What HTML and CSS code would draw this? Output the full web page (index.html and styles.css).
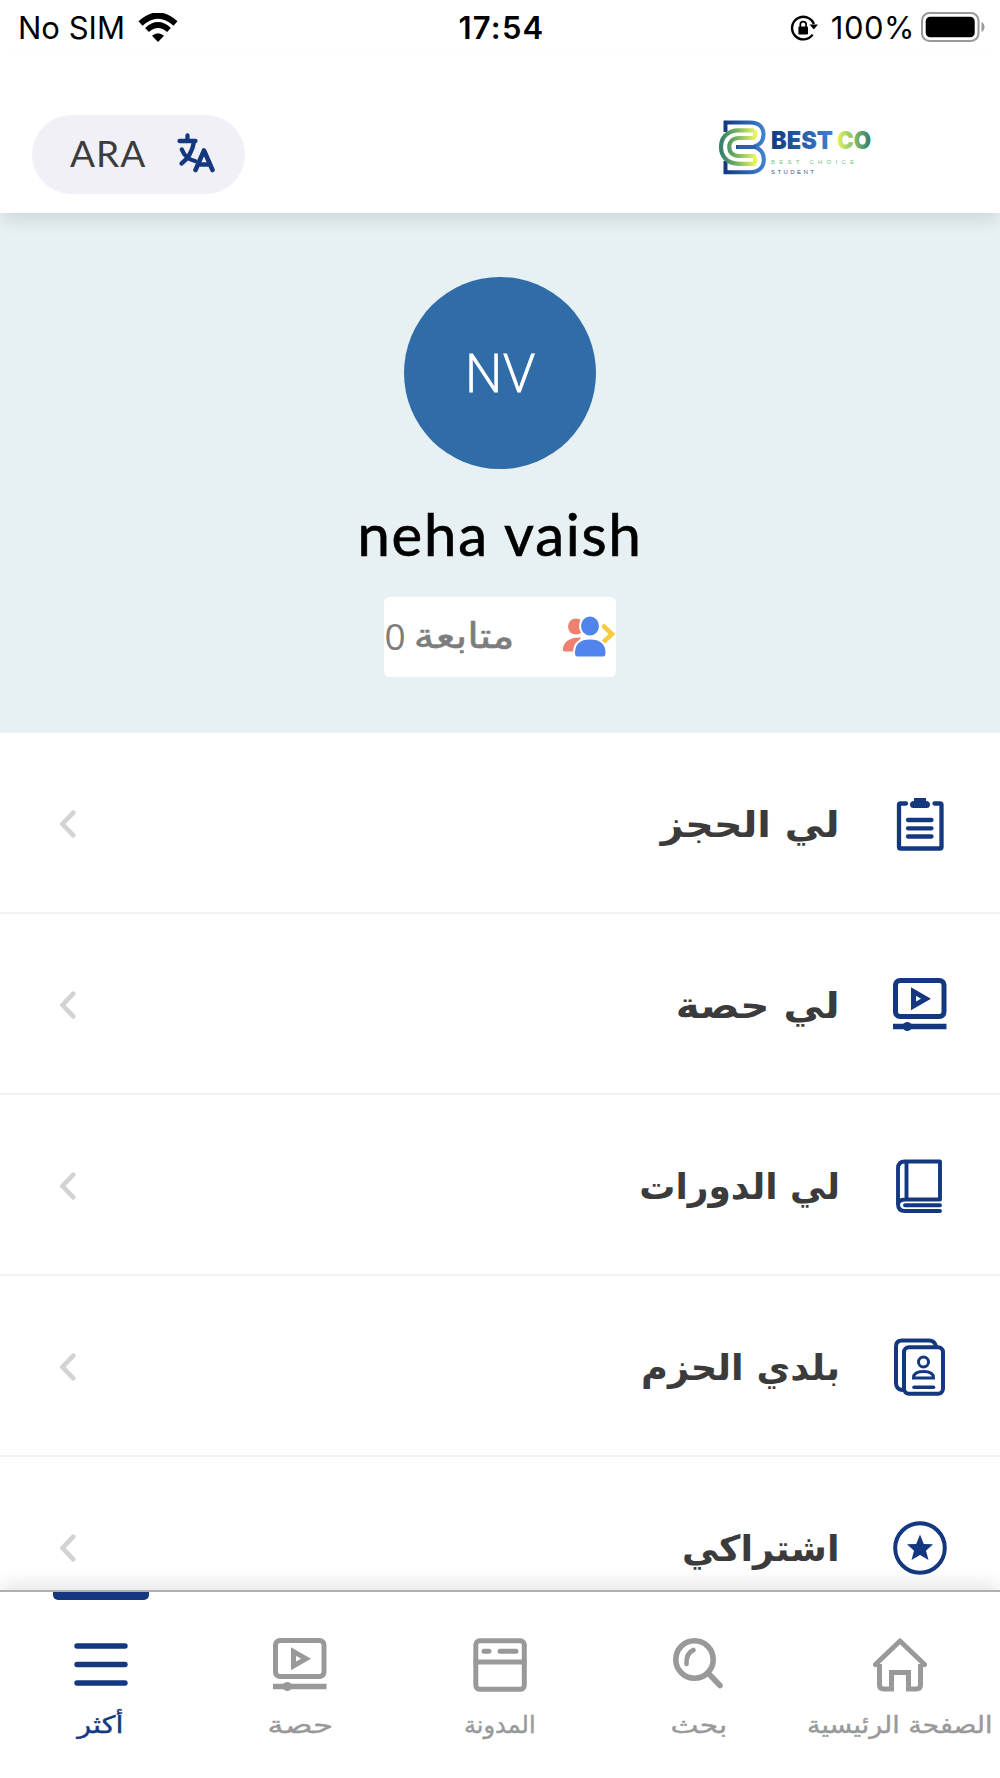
FILE: index.html
```html
<!DOCTYPE html>
<html lang="ar">
<head>
    <meta charset="UTF-8" />
    <title>BestCo</title>
    <link rel="stylesheet" href="styles.css">
</head>
<body>
    <svg class="defs">
        <symbol id="video" viewBox="0 0 54 54">
            <rect x="2.500" y="2.500" width="48.500" height="36" rx="4.500" fill="none" stroke="currentColor" stroke-width="5" />
            <path d="M20.500 13.500V28L33 20.700Z" fill="none" stroke="currentColor" stroke-width="5" />
            <path d="M0 48.500H53.500" stroke="currentColor" stroke-width="5.400" />
            <circle cx="14.300" cy="48.500" r="4.500" fill="currentColor" />
        </symbol>
        <symbol id="chevron" viewBox="0 0 16 28">
            <path d="M13.300 2.700L2.500 14L13.300 25.300" fill="none" stroke="#d3d3d3" stroke-width="4.600" stroke-linecap="round" />
        </symbol>
    </svg>

    <div class="status">
        <div class="status-left">
            <span class="sim">No SIM</span>
            <svg class="wifi" width="40" height="30" viewBox="0 0 40 30">
                <path d="M2.500 10.500Q20 -5.500 37.500 10.500" fill="none" stroke="#000" stroke-width="6" />
                <path d="M9 17Q20 7 31 17" fill="none" stroke="#000" stroke-width="5.600" />
                <path d="M14 22.800Q20 17.600 26 22.800L20 29Z" fill="#000" />
            </svg>
        </div>
        <span class="time">17:54</span>
        <div class="status-right">
            <svg class="lock" width="28" height="28" viewBox="0 0 28 28">
                <path d="M22.600 20.600A11.300 11.300 0 1 1 23.900 10" fill="none" stroke="#000" stroke-width="2.400" />
                <path d="M19.500 10.500H28L23.800 15.500Z" fill="#000" />
                <rect x="8.400" y="12.500" width="9.600" height="8" rx="1" fill="#000" />
                <path d="M10.300 13V10.500a2.900 2.900 0 0 1 5.800 0V13" fill="none" stroke="#000" stroke-width="1.700" />
            </svg>
            <span class="percent">100%</span>
            <svg class="battery" width="64" height="30" viewBox="0 0 64 30">
                <rect x="1" y="1" width="56.500" height="28" rx="7.500" fill="none" stroke="#999" stroke-width="2" />
                <rect x="4.700" y="4.700" width="49" height="20.600" rx="4.500" fill="#000" />
                <path d="M60.500 10Q63.500 11.500 63.500 15T60.500 20Z" fill="#999" />
            </svg>
        </div>
    </div>

    <header>
        <div class="lang">
            <span>ARA</span>
            <svg width="38" height="40" viewBox="0 0 38 40" fill="none" stroke="#14387f" stroke-width="4.300" stroke-linecap="round" stroke-linejoin="round">
                <path d="M2.500 8H18.500M10.500 2.500V8M17 9Q14.500 23 4.500 30.500M4.800 16.500Q8.500 26 18 28" />
                <path d="M18.500 37L27 17.500L35.500 37M21.500 31.500H32.500" stroke-width="4.600" />
            </svg>
        </div>
        <svg class="logo" width="155" height="56" viewBox="0 0 155 56">
            <defs>
                <linearGradient id="blue" x1="0" x2="1"><stop offset="0" stop-color="#123a80" /><stop offset="1" stop-color="#3f80cf" /></linearGradient>
                <linearGradient id="green" x1="0" x2="1"><stop offset="0" stop-color="#35806f" /><stop offset=".4" stop-color="#6bab62" /><stop offset="1" stop-color="#e9f660" /></linearGradient>
                <linearGradient id="lime" x1="0" x2="1"><stop offset="0" stop-color="#e6f462" /><stop offset=".55" stop-color="#7db866" /><stop offset="1" stop-color="#2f7a72" /></linearGradient>
            </defs>
            <path d="M7.500 13V3.500H32C42 3.500 45.500 9 45.500 15.500S42 26 36 27.700C42 29.500 45.800 34 45.800 41S41 53.300 32 53.300H7.500V42M36 28H18" fill="none" stroke="url(#blue)" stroke-width="4" />
            <path d="M36 11.300H21C9 11.300 3 19 3 28S9 44.800 21 44.800H36Q38.500 41 36 37H21C15 37 11.300 33.500 11.300 28S15 19 21 19H36Q38.500 15 36 11.300" fill="none" stroke="url(#green)" stroke-width="4.200" />
            <path d="M38 28H20" stroke="#2c62ac" stroke-width="3.400" />
            <text class="brand" x="53" y="30" textLength="62" lengthAdjust="spacingAndGlyphs" fill="url(#blue)">BEST</text>
            <text class="brand" x="119" y="30" textLength="34" lengthAdjust="spacingAndGlyphs" fill="url(#lime)">CO</text>
            <text class="tagline" x="53" y="45" textLength="83" fill="#6fc27a">BEST CHOICE</text>
            <text class="tagline" x="53" y="54.500" textLength="43" fill="#31578f">STUDENT</text>
        </svg>
    </header>

    <section class="profile">
        <div class="avatar">NV</div>
        <h1>neha vaish</h1>
        <div class="follow" dir="rtl">
            <svg width="54" height="42" viewBox="0 0 54 42">
                <g fill="#ee8070">
                    <ellipse cx="14" cy="10.500" rx="8" ry="8" />
                    <path d="M1 34V33C1 26 8 21 19 21.500L12 35.500H3Q1 35.500 1 34Z" />
                </g>
                <path d="M42 10.500L50 18L42 25.500" fill="none" stroke="#f8cb45" stroke-width="4.600" stroke-linecap="round" />
                <g fill="#5185ec" stroke="#fff" stroke-width="2">
                    <ellipse cx="28" cy="10" rx="10" ry="10.500" />
                    <path d="M12 37C12 27 18 22.500 28 22.500S44.500 27 44.500 37Q44.500 41.500 41 41.500H15.500Q12 41.500 12 37Z" />
                </g>
            </svg>
            <span class="follow-text">متابعة</span>
            <span class="count">0</span>
        </div>
    </section>

    <main dir="rtl">
        <div class="row">
            <svg width="54" height="54" viewBox="0 0 54 54" fill="none" stroke="#14387f" stroke-width="4.300" stroke-linecap="round">
                <path d="M13 6.500H7.500Q6 6.500 6 8V50Q6 51.500 7.500 51.500H47Q48.500 51.500 48.500 50V8Q48.500 6.500 47 6.500H41.500" />
                <path d="M15 23H38.500M15 31.300H38.500M15 39.500H38.500" />
                <path d="M21 1H33V4Q37 4 37 7.500T33.500 11H20.500Q17 11 17 7.500T21 4Z" fill="#14387f" stroke="none" />
            </svg>
            <span class="label l1">لي الحجز</span>
            <svg class="chevron"><use href="#chevron" /></svg>
        </div>
        <div class="row">
            <svg class="blue" width="54" height="54"><use href="#video" /></svg>
            <span class="label l2">لي حصة</span>
            <svg class="chevron"><use href="#chevron" /></svg>
        </div>
        <div class="row">
            <svg width="54" height="54" viewBox="0 0 54 54" fill="none" stroke="#14387f" stroke-width="3.900" stroke-linecap="round" stroke-linejoin="round">
                <path d="M47 52H12Q5 52 5 45V9.500Q5 2.500 12 2.500H47V40.500H12Q5 40.500 5 46M13.500 3V40M12 46.200H47" />
            </svg>
            <span class="label l3">لي الدورات</span>
            <svg class="chevron"><use href="#chevron" /></svg>
        </div>
        <div class="row">
            <svg width="54" height="58" viewBox="0 0 54 58" fill="none" stroke="#14387f" stroke-width="4" stroke-linecap="round">
                <path d="M43 8Q41.500 2.500 36 2.500H9Q3 2.500 3 8.500V45Q3 51 9 52" />
                <rect x="11" y="9.300" width="39" height="46.500" rx="5" />
                <circle cx="30.500" cy="24" r="5" stroke-width="3" />
                <path d="M20.500 40Q20.500 33.500 30.500 33.500T40.500 40Z" stroke-width="3" />
                <path d="M21 49.300H40.500" stroke-width="3.600" />
            </svg>
            <span class="label l4">بلدي الحزم</span>
            <svg class="chevron"><use href="#chevron" /></svg>
        </div>
        <div class="row">
            <svg width="54" height="54" viewBox="0 0 54 54">
                <circle cx="27" cy="27" r="24.800" fill="none" stroke="#14387f" stroke-width="4" />
                <path d="M27 13.500L30.800 23L40 23.200L33 29.800L35.500 39L27 34L18.500 39L21 29.800L14 23.200L23.200 23Z" fill="#14387f" />
            </svg>
            <span class="label l5">اشتراكي</span>
            <svg class="chevron"><use href="#chevron" /></svg>
        </div>
    </main>

    <nav dir="rtl">
        <a class="tab">
            <svg width="54" height="54" viewBox="0 0 54 54" fill="none" stroke="#999" stroke-width="5">
                <path d="M2.500 26.500L27 3L51.500 26.500" stroke-linecap="round" stroke-linejoin="round" />
                <path d="M6.500 26V47Q6.500 51 11 51H18.500V34.500H35.500V51H43Q47.500 51 47.500 47V26" />
            </svg>
            <span class="t1">الصفحة الرئيسية</span>
        </a>
        <a class="tab">
            <svg width="54" height="54" viewBox="0 0 54 54" fill="none" stroke="#999" stroke-linecap="round">
                <circle cx="22.500" cy="21.500" r="18.700" stroke-width="5.600" />
                <path d="M37 36L48 47.500" stroke-width="5.600" />
                <path d="M21.500 12Q14 15 14.500 26" stroke-width="4.600" />
            </svg>
            <span class="t2">بحث</span>
        </a>
        <a class="tab">
            <svg width="54" height="54" viewBox="0 0 54 54" fill="none" stroke="#999" stroke-width="5" stroke-linecap="round">
                <rect x="2.800" y="2.800" width="48.500" height="48.500" rx="4" />
                <path d="M3 24H51M11 13.300H16M27 13.300H43" />
            </svg>
            <span class="t3">المدونة</span>
        </a>
        <a class="tab">
            <svg width="54" height="54"><use href="#video" /></svg>
            <span class="t4">حصة</span>
        </a>
        <a class="tab active">
            <svg width="54" height="54" viewBox="0 0 54 54" stroke="currentColor" stroke-width="5.400" stroke-linecap="round">
                <path d="M3 8H51M3 26.500H51M3 45H51" />
            </svg>
            <span class="t5">أكثر</span>
        </a>
    </nav>
</body>
</html>
```
FILE: styles.css
```css
* {
    padding: 0;
    margin: 0;
    box-sizing: border-box;
}
body {
    width: 1000px;
    height: 1778px;
    display: flex;
    flex-direction: column;
    overflow: hidden;
    background: white;
    font-family: Lato, "DejaVu Sans", sans-serif;
}
svg {
    display: block;
    flex: none;
}
.defs {
    width: 0;
    height: 0;
    position: absolute;
}
/* barre du haut */
.status {
    height: 54px;
    flex: none;
    display: grid;
    grid-template-columns: 1fr auto 1fr;
    align-items: center;
    padding: 1px 15px 0 18px;
    font-family: Inter, sans-serif;
    font-size: 31px;
    line-height: 54px;
}
.status-left, .status-right {
    display: flex;
    align-items: center;
}
.status-right {
    justify-content: flex-end;
}
.wifi {
    margin-left: 13px;
}
.time {
    font-weight: 600;
    letter-spacing: 1.2px;
}
.percent {
    letter-spacing: 0.5px;
}
.lock {
    margin-right: 13px;
}
.battery {
    margin-left: 6px;
    margin-bottom: 2px;
}
header {
    height: 159px;
    flex: none;
    display: flex;
    justify-content: space-between;
    align-items: flex-start;
    padding: 61px 127px 0 32px;
    background: white;
    box-shadow: 0 10px 16px -2px rgba(0, 0, 0, 0.1);
    position: relative;
}
.lang {
    width: 213px;
    height: 79px;
    display: flex;
    justify-content: space-between;
    align-items: center;
    padding: 0 30px 4px 38px;
    border-radius: 40px;
    background: #f1f0f6;
    color: #3c3c3c;
    font-size: 37px;
    letter-spacing: 1px;
}
.logo {
    margin-top: 4px;
    overflow: visible;
}
.brand {
    font-family: Inter, sans-serif;
    font-size: 25px;
    font-weight: 900;
}
.tagline {
    font-family: "Liberation Sans", sans-serif;
    font-size: 6px;
}
/* le profil */
.profile {
    height: 520px;
    flex: none;
    display: flex;
    flex-direction: column;
    align-items: center;
    padding-top: 64px;
    background: #e7f1f4;
}
.avatar {
    width: 192px;
    height: 192px;
    border-radius: 50%;
    background: #306da8;
    color: white;
    font-family: "Open Sans", sans-serif;
    font-size: 53px;
    font-weight: 300;
    line-height: 189px;
    text-align: center;
    letter-spacing: 1px;
    -webkit-text-stroke: 0.8px white;
}
h1 {
    height: 128px;
    font-size: 58px;
    font-weight: 400;
    line-height: 129px;
    letter-spacing: 1.8px;
    color: black;
    -webkit-text-stroke: 0.7px black;
}
.follow {
    width: 232px;
    height: 80px;
    display: flex;
    align-items: center;
    border-radius: 6px;
    background: white;
    color: #7d7d7d;
    font-family: "DejaVu Sans", sans-serif;
    font-size: 35px;
}
.follow-text {
    margin-right: 48px;
    margin-bottom: 2px;
    transform: scaleX(1.18);
    transform-origin: right;
    -webkit-text-stroke: 0.6px;
}
.count {
    margin-right: 23px;
    margin-bottom: 3px;
    font-family: "Open Sans", sans-serif;
    font-size: 37px;
}
/* la liste */
main {
    flex: none;
    height: 857px;
    overflow: hidden;
}
.row {
    height: 181px;
    display: flex;
    align-items: center;
    padding: 2px 53px 0 60px;
    border-bottom: 2px solid #f0f0f5;
}
.blue {
    color: #14387f;
}
.label {
    margin-right: 53px;
    margin-top: 2px;
    color: #3b3b3b;
    font-family: "DejaVu Sans", sans-serif;
    font-size: 36px;
    font-weight: bold;
    white-space: nowrap;
    transform-origin: right;
}
/* largeur de chaque mot */
.l1 {
    transform: scaleX(1.1);
}
.l2 {
    transform: scaleX(1.125);
}
.l4 {
    transform: scaleX(1.02);
}
.l5 {
    transform: scaleX(1.02);
}
.chevron {
    width: 16px;
    height: 28px;
    margin-right: auto;
}
/* menu du bas */
nav {
    height: 188px;
    flex: none;
    display: flex;
    border-top: 2px solid #b0b0b0;
    background: white;
    box-shadow: 0 -8px 18px -2px rgba(0, 0, 0, 0.11);
    position: relative;
}
.tab {
    width: 199.5px;
    display: flex;
    flex-direction: column;
    align-items: center;
    padding-top: 46px;
    color: #999;
    font-family: "DejaVu Sans", sans-serif;
    font-size: 24px;
    white-space: nowrap;
    position: relative;
}
.tab:first-child {
    width: 201px;
}
.tab span {
    margin-top: 19px;
    -webkit-text-stroke: 0.4px;
}
.t1 {
    transform: scaleX(1.12);
}
.t2 {
    transform: scaleX(1.24);
}
.t4 {
    transform: scaleX(1.36);
}
.t5 {
    transform: scaleX(1.2);
}
.active {
    color: #14387f;
}
.active::before {
    content: "";
    position: absolute;
    top: 0;
    left: 52px;
    width: 96px;
    height: 8px;
    border-radius: 0 0 5px 5px;
    background: #14387f;
}
```
